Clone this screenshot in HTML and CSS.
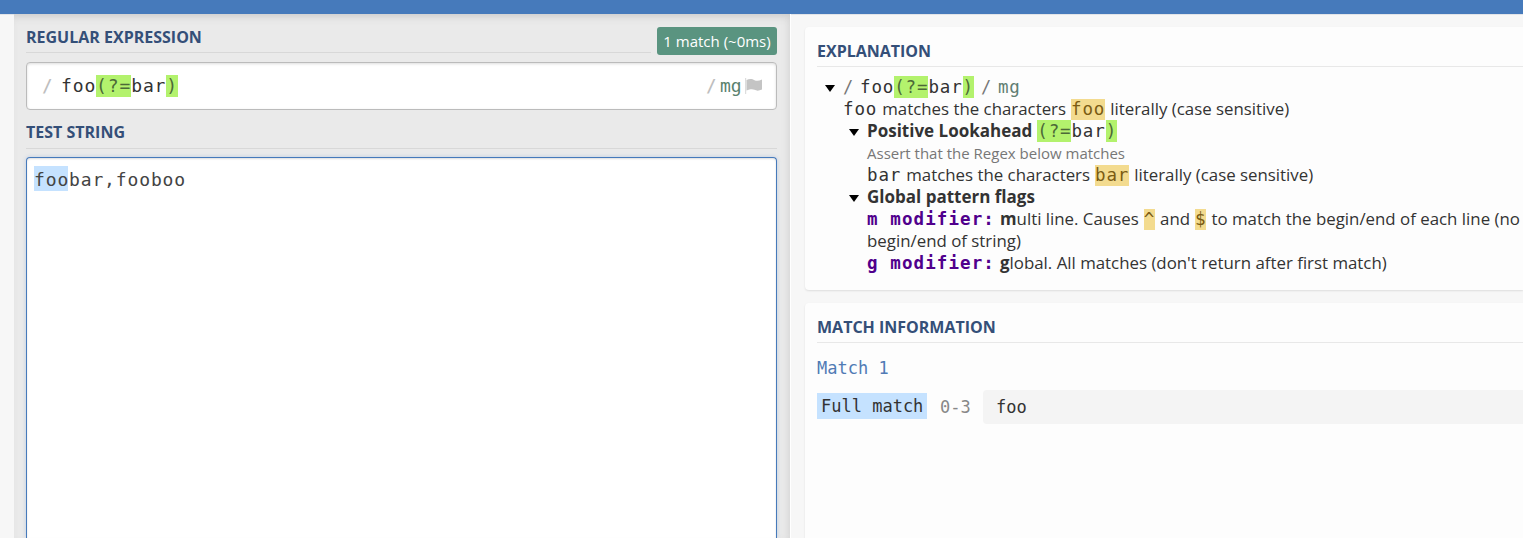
FILE: index.html
```html
<!DOCTYPE html>
<html lang="en">
<head>
<meta charset="utf-8">
<title>Regex tester</title>
<link rel="stylesheet" href="styles.css">
</head>
<body>
<header class="topbar"></header>
<main class="workspace">
  <section class="editor">
    <div class="editor-head">
      <h2 class="title">REGULAR EXPRESSION</h2>
      <span class="badge">1 match (~0ms)</span>
    </div>
    <div class="regex-box">
      <span class="delim">/</span>
      <span class="code pattern">foo<span class="group">(?=</span>bar<span class="group">)</span></span>
      <span class="delim end">/</span>
      <span class="flags">mg</span>
      <svg class="flag" width="18" height="16" viewBox="0 0 18 16"><path class="pole" d="M0 0h1.200v16h-1.200z"/><path class="cloth" d="M1.500 2C5 .2 7.500 1.200 9.500 2.200s4.500 .8 7.500-.7v10c-3.200 1.500-5.500 1.400-7.500 .3s-4.500-.8-8 .7z"/></svg>
    </div>
    <h2 class="title test-title">TEST STRING</h2>
    <div class="test-box"><span class="code sample"><span class="hit">foo</span>bar,fooboo</span></div>
  </section>
  <section class="results">
    <article class="panel explanation">
      <h2 class="title">EXPLANATION</h2>
      <div class="tree">
        <div class="line arrow"><span class="slash">/</span><span class="code root">foo<span class="group">(?=</span>bar<span class="group">)</span></span><span class="slash close">/</span><span class="mods">mg</span></div>
        <div class="line"><span class="code">foo</span> <span class="prose">matches the characters</span> <span class="code lit">foo</span> <span class="prose">literally (case sensitive)</span></div>
        <div class="branch">
          <div class="line arrow"><b class="name">Positive Lookahead</b> <span class="code"><span class="group">(?=</span>bar<span class="group">)</span></span></div>
          <div class="line note">Assert that the Regex below matches</div>
          <div class="line"><span class="code">bar</span> <span class="prose">matches the characters</span> <span class="code lit">bar</span> <span class="prose">literally (case sensitive)</span></div>
          <div class="line arrow"><b class="name">Global pattern flags</b></div>
          <div class="line"><b class="modifier">m modifier:</b> <span class="prose"><b>m</b>ulti line. Causes</span> <span class="code lit">^</span> <span class="prose">and</span> <span class="code lit">$</span> <span class="prose">to match the begin/end of each line (no</span></div>
          <div class="line">begin/end of string)</div>
          <div class="line"><b class="modifier">g modifier:</b> <span class="prose"><b>g</b>lobal. All matches (don't return after first match)</span></div>
        </div>
      </div>
    </article>
    <article class="panel matches">
      <h2 class="title">MATCH INFORMATION</h2>
      <div class="match-name">Match 1</div>
      <div class="match-row"><span class="full">Full match</span><span class="range">0-3</span><span class="value">foo</span></div>
    </article>
  </section>
</main>
</body>
</html>
```
FILE: styles.css
```css
* { box-sizing: border-box; }
body { margin: 0; height: 538px; overflow: hidden; background: #f7f7f7; color: #333; font: 16.850px/22px "Open Sans", sans-serif; }
.topbar { height: 14px; background: #467abb; }
.workspace { display: flex; height: 524px; padding-left: 14px; box-shadow: inset 0 1px 0 #e2e4e8; }
.editor { flex: none; display: flex; flex-direction: column; width: 776px; padding: 12px 13px 0 12px; background: #eaeaea; box-shadow: inset 0 7px 8px -5px #c9c9c9, inset -7px 0 8px -6px #d5d5d5; }
.title { margin: 0; height: 27px; border-bottom: 1px solid #d8d8d8; color: #344f78; font-size: 16px; line-height: 22px; font-weight: 700; white-space: nowrap; }
.editor-head { display: flex; height: 36px; gap: 6px; }
.editor-head .title { flex: 1; }
.badge { width: 120px; height: 28px; margin-top: 1px; border-radius: 3px; background: #5a9480; color: #fff; font-size: 15px; line-height: 29px; text-align: center; white-space: nowrap; }
.regex-box { display: flex; align-items: center; height: 48px; padding: 0 13px 0 15px; border: 1px solid #bbb; border-radius: 4px; background: #fff; box-shadow: inset 0 1px 3px #ddd; }
.code, .modifier, .flags, .mods, .delim, .slash, .match-name, .match-row { font-family: "DejaVu Sans Mono", monospace; white-space: nowrap; }
.code { font-size: 17.500px; letter-spacing: .86px; color: #333; }
.group { display: inline-block; height: 22px; line-height: 22px; background: #b3f26d; color: #4c6938; }
.pattern { margin-left: 7px; font-size: 18px; letter-spacing: .86px; }
.delim { width: 12px; color: #bebebe; font-size: 17px; font-weight: bold; }
.delim.end { margin-left: auto; }
.flags { width: 25px; margin-left: 2px; color: #5a826e; font-size: 18px; }
.flag { flex: none; fill: #c4c4c4; }
.pole { fill: #ddd; }
.test-title { margin-top: 11px; height: 28px; }
.test-box { flex: 1; margin-top: 8px; padding: 8px 7px; border: 1px solid #467abb; border-bottom: 0; border-radius: 4px 4px 0 0; background: #fff; box-shadow: 0 0 4px #bccbe0, inset 0 1px 2px #ddd; }
.sample { font-size: 18px; letter-spacing: .86px; color: #444; }
.hit { display: inline-block; width: 34px; height: 25px; margin-right: 1px; line-height: 27px; background: #c5e2ff; }
.results { flex: 1; min-width: 0; padding: 13px 0 0 15px; overflow: hidden; box-shadow: inset 1px 0 #fff; }
.panel { background: #fdfdfd; padding-left: 12px; border-radius: 4px 0 0 4px; box-shadow: 0 1px 2px #ddd; }
.panel .title { border-color: #e8e8e8; }
.explanation { height: 263px; padding-top: 13px; }
.tree { padding: 9px 0 0 26px; }
.branch { padding-left: 24px; }
.line { display: flex; align-items: center; gap: 5px; height: 22px; white-space: nowrap; }
.arrow::before { content: ""; flex: none; width: 10px; height: 7px; margin: 3px 3px 0 -18px; background: #000; clip-path: polygon(0 0, 100% 0, 50% 100%); }
.name { font-size: 17px; }
.slash { width: 12px; color: #777; font-size: 17px; }
.slash.close { margin-left: 2px; }
.mods { font-size: 17.500px; letter-spacing: .8px; color: #617e72; }
.lit { height: 21px; line-height: 21px; background: #f3db8f; color: #7b5c13; }
.note { font-size: 15px; color: #777; }
.modifier { color: #50008c; font-size: 17.500px; letter-spacing: 1.100px; }
.matches { height: 240px; margin-top: 13px; padding-top: 13px; }
.match-name { margin-top: 14px; color: #507bb5; font-size: 17px; line-height: 22px; }
.match-row { display: flex; align-items: center; margin-top: 11px; height: 34px; font-size: 17px; }
.full { width: 110px; height: 26px; margin-bottom: 2px; line-height: 27px; padding-left: 4px; background: #c5e2ff; }
.range { width: 56px; padding-left: 13px; color: #888; }
.value { flex: 1; height: 34px; line-height: 34px; padding-left: 13px; border-radius: 4px 0 0 4px; background: #f4f4f4; }
```
